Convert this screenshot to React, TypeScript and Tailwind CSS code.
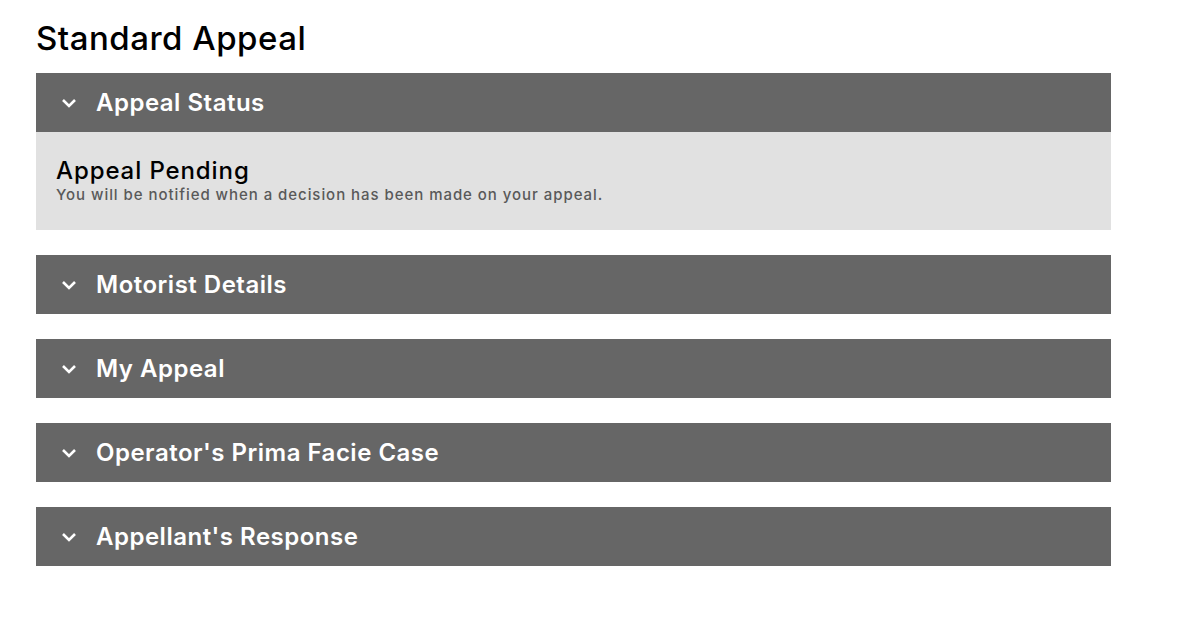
const sections = [
  'Appeal Status',
  'Motorist Details',
  'My Appeal',
  "Operator's Prima Facie Case",
  "Appellant's Response",
];

function Chevron() {
  return (
    <svg width="16" height="10" viewBox="0 0 16 10" fill="none" className="shrink-0">
      <polyline points="2,2 8,8 14,2" stroke="white" strokeWidth="2.6" />
    </svg>
  );
}

function SectionHeader({ title }: { title: string }) {
  return (
    <div className="flex h-[59px] items-center bg-[#666666] pl-[25px] text-white">
      <Chevron />
      <span className="ml-[19px] text-[24px] font-semibold tracking-[0.5px]">{title}</span>
    </div>
  );
}

export default function App() {
  return (
    <div className="min-h-screen bg-white font-['Inter',sans-serif] text-black">
      <div className="w-[1075px] ml-[36px] pt-[18px]">
        <h1 className="text-[33px] leading-[40px] font-medium tracking-[0.5px] mb-[15px]">Standard Appeal</h1>
        <div className="flex flex-col gap-[25px]">
          {sections.map((s, i) => (
            <div key={s}>
              <SectionHeader title={s} />
              {i === 0 && (
                <div className="h-[98px] bg-[#e1e1e1] px-[20px] pt-[25px]">
                  <div className="text-[24px] leading-[28px] font-medium tracking-[0.9px]">Appeal Pending</div>
                  <div className="text-[15px] leading-[20px] font-medium tracking-[0.95px] text-[#595959]">
                    You will be notified when a decision has been made on your appeal.
                  </div>
                </div>
              )}
            </div>
          ))}
        </div>
      </div>
    </div>
  );
}
